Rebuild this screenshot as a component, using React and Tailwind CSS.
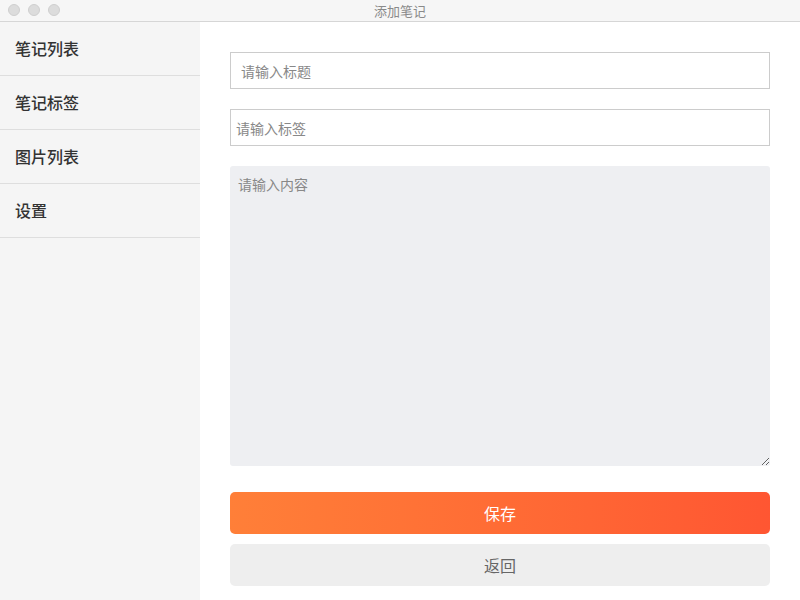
import React from "react";

const font = { fontFamily: '"Noto Sans CJK SC", "Noto Sans", sans-serif' };

const navItems = ["笔记列表", "笔记标签", "图片列表", "设置"];

export default function App() {
  return (
    <div className="w-[800px] h-[600px] flex flex-col bg-white overflow-hidden" style={font}>
      {/* window title bar */}
      <div className="h-[22px] shrink-0 flex items-center relative bg-[#f6f6f6] border-b border-[#d6d6d6]">
        <div className="absolute left-[8px] top-[4px] flex gap-[8px]">
          <span className="w-[12px] h-[12px] rounded-full bg-[#dcdcdc] border border-[#cfcfcf]" />
          <span className="w-[12px] h-[12px] rounded-full bg-[#dcdcdc] border border-[#cfcfcf]" />
          <span className="w-[12px] h-[12px] rounded-full bg-[#dcdcdc] border border-[#cfcfcf]" />
        </div>
        <div className="flex-1 text-center text-[13px] leading-[21px] text-[#8a8a8a]">添加笔记</div>
      </div>

      <div className="flex flex-1 min-h-0">
        {/* sidebar navigation */}
        <aside className="w-[200px] shrink-0 bg-[#f5f5f5]">
          {navItems.map((item) => (
            <div
              key={item}
              className="h-[54px] flex items-center pl-[15px] pb-[2px] border-b border-[#dedede] text-[16px] font-medium text-[#333]"
            >
              {item}
            </div>
          ))}
        </aside>

        {/* note form */}
        <main className="flex-1 pl-[30px] pr-[30px] pt-[30px] flex flex-col">
          <input
            className="h-[37px] w-full border border-[#cccccc] px-[10px] text-[14px] text-[#333] placeholder:text-[#888] outline-none"
            placeholder="请输入标题"
          />
          <input
            className="h-[37px] w-full mt-[20px] border border-[#cccccc] px-[5px] text-[14px] text-[#333] placeholder:text-[#888] outline-none"
            placeholder="请输入标签"
          />
          <textarea
            className="h-[300px] w-full mt-[20px] bg-[#eeeff2] rounded-[3px] px-[8px] py-[8px] text-[14px] text-[#333] placeholder:text-[#888] outline-none"
            placeholder="请输入内容"
          />
          <button className="h-[42px] w-full mt-[26px] rounded-[5px] bg-gradient-to-r from-[#ff7f38] to-[#ff5632] text-white text-[16px]">
            保存
          </button>
          <button className="h-[42px] w-full mt-[10px] rounded-[5px] bg-[#eeeeee] text-[#666] text-[16px]">
            返回
          </button>
        </main>
      </div>
    </div>
  );
}
